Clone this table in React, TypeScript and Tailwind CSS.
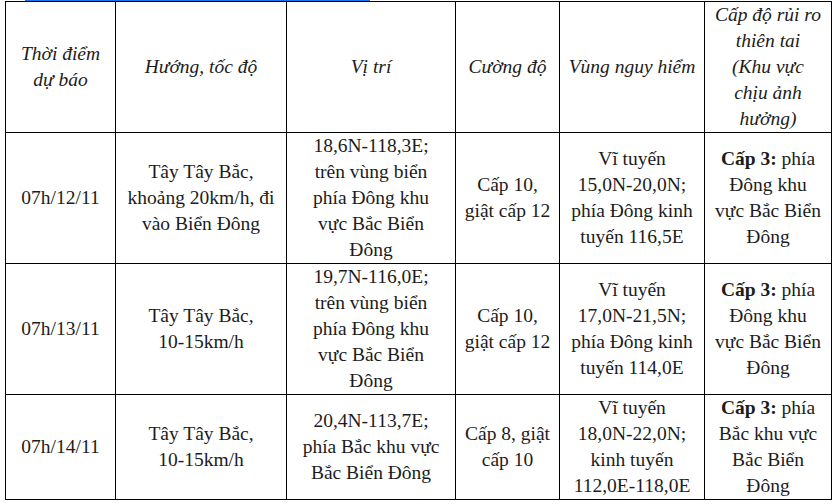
import React from "react";

type Cell = React.ReactNode;

const B = ({ children }: { children: React.ReactNode }) => <b className="font-bold">{children}</b>;

const lines = (...ls: React.ReactNode[]) =>
  ls.map((l, i) => (
    <React.Fragment key={i}>
      {i > 0 && <br />}
      {l}
    </React.Fragment>
  ));

const header: Cell[] = [
  lines("Thời điểm", "dự báo"),
  lines("Hướng, tốc độ"),
  lines("Vị trí"),
  lines("Cường độ"),
  lines("Vùng nguy hiểm"),
  lines("Cấp độ rủi ro", "thiên tai", "(Khu vực", "chịu ảnh", "hưởng)"),
];

const rows: { h: string; cells: Cell[] }[] = [
  {
    h: "h-[131px]",
    cells: [
      lines("07h/12/11"),
      lines("Tây Tây Bắc,", "khoảng 20km/h, đi", "vào Biển Đông"),
      lines("18,6N-118,3E;", "trên vùng biển", "phía Đông khu", "vực Bắc Biển", "Đông"),
      lines("Cấp 10,", "giật cấp 12"),
      lines("Vĩ tuyến", "15,0N-20,0N;", "phía Đông kinh", "tuyến 116,5E"),
      lines(<><B>Cấp 3:</B> phía</>, "Đông khu", "vực Bắc Biển", "Đông"),
    ],
  },
  {
    h: "h-[131px]",
    cells: [
      lines("07h/13/11"),
      lines("Tây Tây Bắc,", "10-15km/h"),
      lines("19,7N-116,0E;", "trên vùng biển", "phía Đông khu", "vực Bắc Biển", "Đông"),
      lines("Cấp 10,", "giật cấp 12"),
      lines("Vĩ tuyến", "17,0N-21,5N;", "phía Đông kinh", "tuyến 114,0E"),
      lines(<><B>Cấp 3:</B> phía</>, "Đông khu", "vực Bắc Biển", "Đông"),
    ],
  },
  {
    h: "h-[105px]",
    cells: [
      lines("07h/14/11"),
      lines("Tây Tây Bắc,", "10-15km/h"),
      lines("20,4N-113,7E;", "phía Bắc khu vực", "Bắc Biển Đông"),
      lines("Cấp 8, giật", "cấp 10"),
      lines("Vĩ tuyến", "18,0N-22,0N;", "kinh tuyến", "112,0E-118,0E"),
      lines(<><B>Cấp 3:</B> phía</>, "Bắc khu vực", "Bắc Biển", "Đông"),
    ],
  },
];

const widths = ["w-[110px]", "w-[171px]", "w-[169px]", "w-[104px]", "w-[145px]", "w-[127px]"];

export default function App() {
  return (
    <div
      className="w-[836px] h-[504px] bg-white overflow-hidden text-[#1c1c1c]"
      style={{ fontFamily: '"Liberation Serif", "Times New Roman", serif' }}
    >
      <div className="h-px w-[345px] ml-[25px] bg-[#1a73e8]" />
      <table className="ml-[5px] w-[827px] table-fixed border-collapse text-[19.5px] leading-[26px]">
        <colgroup>
          {widths.map((w, i) => (
            <col key={i} className={w} />
          ))}
        </colgroup>
        <tbody>
          <tr className="h-[131px]">
            {header.map((c, i) => (
              <td key={i} className="border border-black p-0 text-center align-middle italic">
                {c}
              </td>
            ))}
          </tr>
          {rows.map((r, ri) => (
            <tr key={ri} className={r.h}>
              {r.cells.map((c, i) => (
                <td key={i} className="border border-black p-0 text-center align-middle">
                  {c}
                </td>
              ))}
            </tr>
          ))}
        </tbody>
      </table>
    </div>
  );
}
